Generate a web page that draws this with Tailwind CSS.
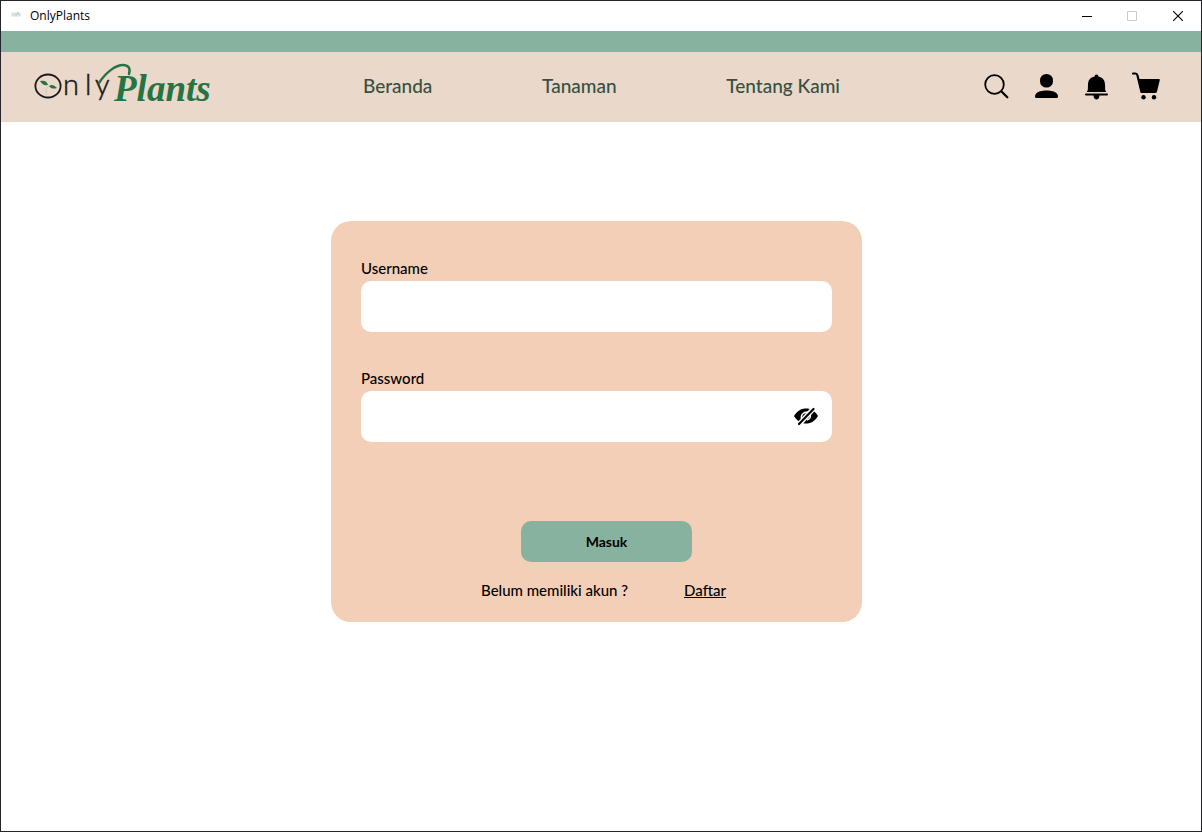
<!DOCTYPE html>
<html lang="id">
<head>
<meta charset="utf-8">
<meta name="viewport" content="width=device-width, initial-scale=1">
<title>OnlyPlants</title>
<script src="https://cdn.jsdelivr.net/npm/@tailwindcss/browser@4"></script>
</head>
<body class="flex min-h-screen flex-col border border-[#25242a] bg-white font-['Lato',sans-serif] font-medium text-black">
  <div class="flex h-[30px] shrink-0 items-center pl-[9px] font-['Open_Sans',sans-serif] font-normal">
    <svg class="mr-2 h-3 w-3" viewBox="0 0 12 12" aria-hidden="true"><path d="M1 2h10v5H1z" fill="#edf0ed"/><path d="M2 5h2M4 3l2 3M6 6l2-4M8 3l2 3" stroke="#b9d3c0" stroke-width="1.2"/></svg>
    <span class="text-xs">OnlyPlants</span>
    <div class="ml-auto flex h-full">
      <button type="button" aria-label="Minimize" class="grid w-[46px] place-items-center"><svg class="h-[10px] w-[10px]" viewBox="0 0 10 10"><path d="M0 5.5h10" stroke="#000"/></svg></button>
      <button type="button" aria-label="Maximize" disabled class="grid w-[44px] place-items-center"><svg class="h-[10px] w-[10px]" viewBox="0 0 10 10"><path d="M.5.5h9v9h-9z" fill="none" stroke="#ccc"/></svg></button>
      <button type="button" aria-label="Close" class="grid w-[47px] place-items-center"><svg class="h-[10px] w-[10px]" viewBox="0 0 10 10"><path d="M0 0l10 10M10 0L0 10" stroke="#000" stroke-width="1.1"/></svg></button>
    </div>
  </div>
  <div class="h-[21px] shrink-0 bg-[#88b2a0]"></div>
  <header class="flex h-[70px] shrink-0 items-center justify-between bg-[#ead8ca] pr-[41px] pb-0.5 pl-[33px]">
    <a href="#" aria-label="OnlyPlants" class="w-[187px]">
      <svg class="h-[46px] w-[180px]" viewBox="0 0 180 46">
        <ellipse cx="14" cy="23" rx="12.6" ry="11.5" fill="none" stroke="#1d1719" stroke-width="1.8"/>
        <path d="M6 18c4-1 7 0 8 4-4 1-6-1-8-4zM15 23c3-2 5-1 8 2-3 1-6 1-8-2z" fill="#267344"/>
        <path d="M12 32v-6l3-3" fill="none" stroke="#c7ccb9" stroke-width=".8"/>
        <text y="32" font-family="Lato" font-weight="300" font-size="29" fill="#1d1719" stroke="#1d1719" stroke-width=".5"><tspan x="29">n</tspan><tspan x="51">l</tspan><tspan x="61">y</tspan></text>
        <path d="M65 20C72 9 82 2 89 2c5 0 8 3 6 9" fill="none" stroke="#267344" stroke-width="2.4" stroke-linecap="round"/>
        <text x="80" y="38" font-family="Liberation Serif" font-style="italic" font-weight="700" font-size="37" fill="#267344">Plants</text>
      </svg>
    </a>
    <nav class="flex w-[477px] justify-between text-[19px] leading-7 text-[#36513f]">
      <a href="#">Beranda</a><a href="#">Tanaman</a><a href="#">Tentang Kami</a>
    </nav>
    <div class="flex gap-[22px]">
      <button type="button" aria-label="Cari"><svg class="size-7" viewBox="0 0 28 28"><circle cx="12.5" cy="12.5" r="9.3" fill="none" stroke="#000" stroke-width="1.8"/><path d="M19.5 19.5l5.8 5.8" stroke="#000" stroke-width="2.3" stroke-linecap="round"/></svg></button>
      <button type="button" aria-label="Profil"><svg class="size-7" viewBox="0 0 28 28"><rect x="8" y="2" width="13" height="13.5" rx="6.3"/><path d="M3 24.5c0-4 5-6 11.5-6S26 20.500 26 24.500q0 1.500-1.500 1.500h-20Q3 26 3 24.500z"/></svg></button>
      <button type="button" aria-label="Notifikasi"><svg class="size-7" viewBox="0 0 28 28"><path d="M14.5 2.500c1.200 0 1.800.8 1.900 2 4.300 1 6.500 3.500 6.600 8l.2 5.500 1 2H4.800l1-2L6 12.500c.1-4.500 2.300-7 6.600-8 .1-1.200.7-2 1.900-2z"/><rect x="3" y="21.500" width="23" height="2" rx="1"/><path d="M11.500 23h6c0 6-6 6-6 0z"/></svg></button>
      <button type="button" aria-label="Keranjang"><svg class="size-7" viewBox="0 0 28 28"><path d="M1 1.500h2.500Q5 1.500 5.500 3.500L9.500 20" fill="none" stroke="#000" stroke-width="2.200" stroke-linecap="round"/><path d="M5.800 7H27q1 0 .8 1L25 19.500q-.3 1.500-1.800 1.500H10.500Q9 21 8.700 19.500z"/><circle cx="11.500" cy="25.200" r="2.200"/><circle cx="22" cy="25.200" r="2.200"/></svg></button>
    </div>
  </header>
  <main class="flex grow items-start justify-center pt-[99px] pr-[9px] pb-8">
    <form class="w-full max-w-[531px] rounded-[20px] bg-[#f3cfb8] px-[30px] pt-[35px] pb-5 text-[15px] leading-6">
      <label for="username" class="mb-px block h-6">Username</label>
      <input id="username" type="text" class="block h-[51px] w-full rounded-[10px] bg-white px-3">
      <label for="password" class="mt-[34px] mb-px block h-6">Password</label>
      <div class="flex h-[51px] items-center rounded-[10px] bg-white pr-[13px]">
        <input id="password" type="password" class="h-full min-w-0 grow rounded-[10px] px-3">
        <button type="button" aria-label="Tampilkan password"><svg class="h-6 w-[26px]" viewBox="0 0 26 24"><path d="M1 11C4 6 8 3.500 13 3.500s9 2.500 12 7.500c-3 5-7 7.500-12 7.500S4 16 1 11z"/><path d="M9 15c-2-5 1-8 6-8M14 15c3-1 4-3 3-6" fill="none" stroke="#fff" stroke-width="1.500"/><path d="M4 21.500L22 2" stroke="#fff" stroke-width="5"/><path d="M6 19L20.500 4" stroke="#000" stroke-width="2.200" stroke-linecap="round"/></svg></button>
      </div>
      <div class="mt-[79px] flex justify-center pl-5">
        <button type="submit" class="h-[41px] w-[171px] rounded-[10px] bg-[#88b2a0] text-sm font-bold">Masuk</button>
      </div>
      <p class="mt-4 flex justify-center gap-14 pl-[14px]"><span>Belum memiliki akun ?</span><a href="#" class="underline">Daftar</a></p>
    </form>
  </main>
</body>
</html>
